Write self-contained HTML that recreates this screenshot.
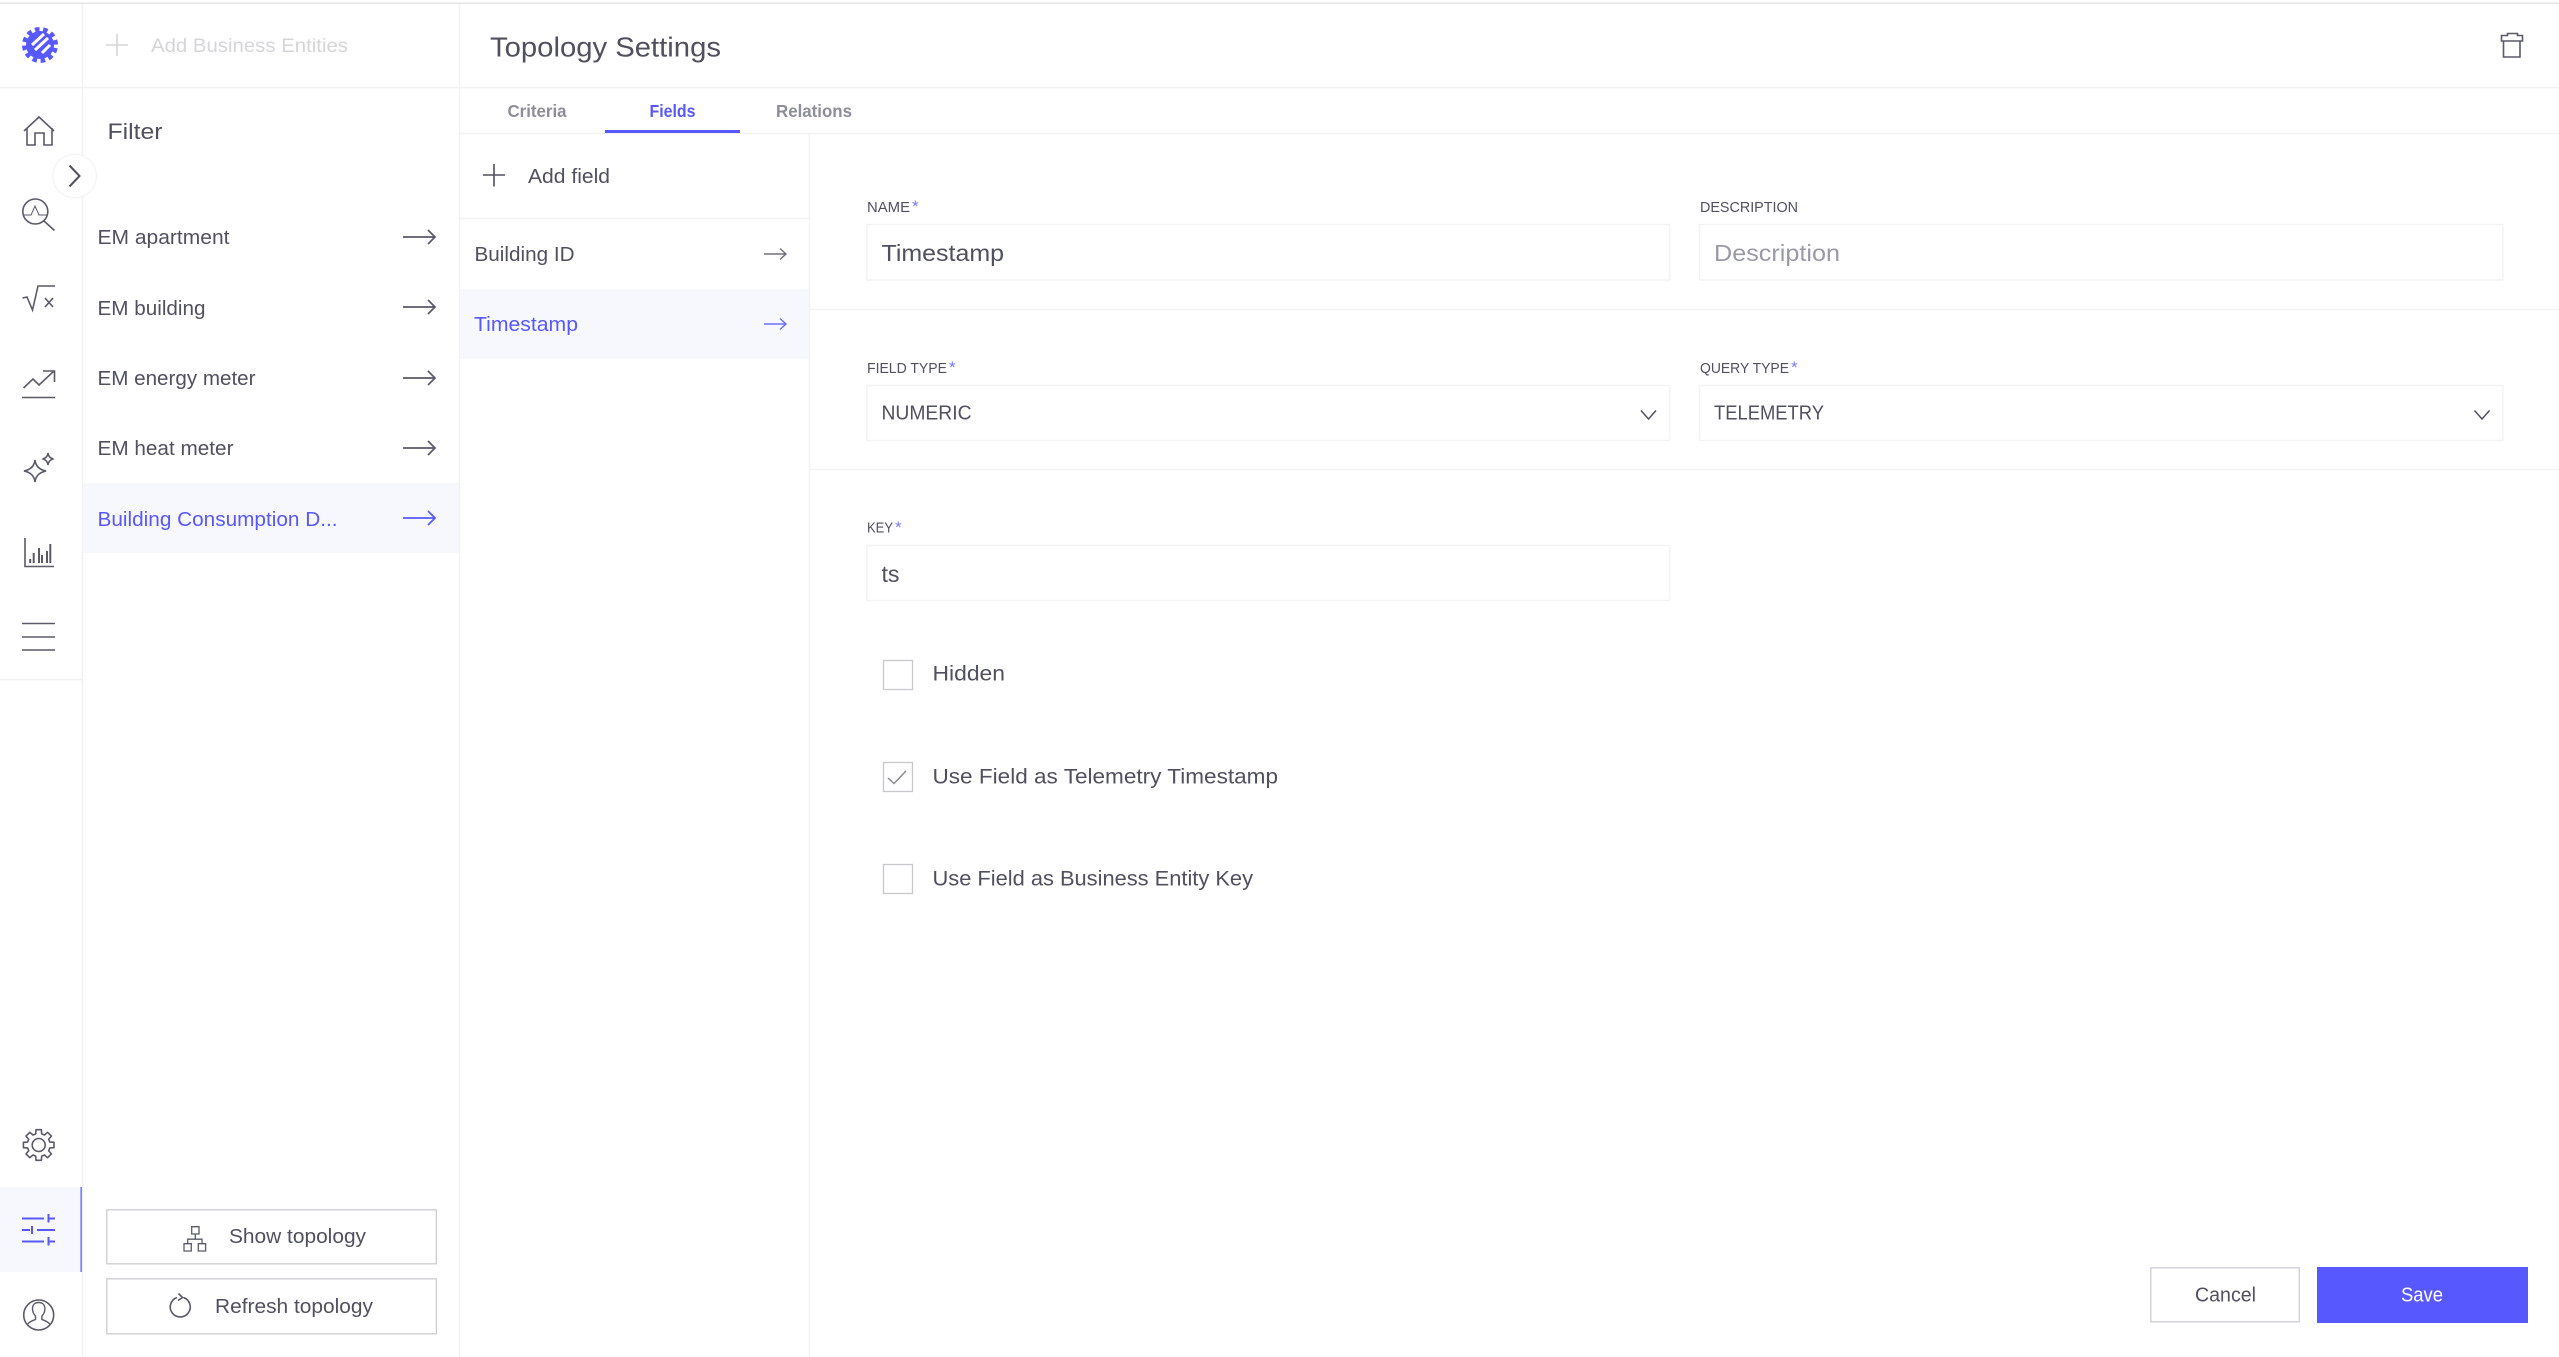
<!DOCTYPE html>
<html><head><meta charset="utf-8"><title>Topology Settings</title>
<style>
html,body{margin:0;padding:0;background:#fff;width:2559px;height:1357px;overflow:hidden}
svg{display:block}
text{font-family:"Liberation Sans",sans-serif;fill:#50505f;font-size:20px}
.i{fill:none;stroke:#5a5a68;stroke-width:1.6}
.l{fill:none;stroke:#f2f2f4;stroke-width:1.5}
.b{fill:#5858ff}
.lab{font-size:14.7px}
.inp{fill:#fff;stroke:#f2f2f4;stroke-width:1.3}
.cb{fill:#fff;stroke:#c8c8cc;stroke-width:1.3}
.btn{fill:#fff;stroke:#cdcdd4;stroke-width:1.3}
</style></head><body>
<svg width="2559" height="1357" viewBox="0 0 2559 1357" xmlns="http://www.w3.org/2000/svg">
<rect width="2559" height="1357" fill="#fff"/>
<rect x="0" y="2.5" width="2559" height="1.5" fill="#e6e6e8"/>

<!-- highlight -->
<rect x="83" y="483" width="376" height="70" fill="#f7f7fe"/>
<rect x="460" y="289" width="349" height="70" fill="#f7f7fe"/>
<rect x="0" y="1187" width="81" height="85" fill="#f7f7fe"/>
<rect x="80.5" y="1187" width="1.5" height="85" fill="#5858ff"/>

<!-- structure lines -->
<path class="l" d="M82.5 4V1357M459.5 4V1357M0 87.5H2559M459 133.5H2559M809.5 134V1357M459 218.5H809M810 309.5H2559M810 469.5H2559M0 679.5H82"/>

<!-- logo -->
<g transform="translate(40 45)">
<circle r="14" fill="#5858ff"/>
<circle r="15.500" fill="none" stroke="#5858ff" stroke-width="5" stroke-dasharray="4.500 3.617" transform="rotate(11)"/>
<g stroke="#fff" stroke-width="3" fill="none">
<path d="M-8 0L4 -11M-5 5L8 -7M2 8L10 0"/>
</g>
</g>

<!-- add business -->
<path d="M117 34V56M106 45H128" fill="none" stroke="#d5d5da" stroke-width="1.6"/>
<text x="151" y="52" style="font-size:19.6px;fill:#d5d5da" textLength="197" lengthAdjust="spacingAndGlyphs">Add Business Entities</text>

<!-- sidebar icons -->
<path class="i" d="M24 131L39 117L54 131M27 128V145H35V133H44V145H52V128"/>
<circle class="i" cx="35.3" cy="211.5" r="12.5"/>
<path class="i" d="M44 221L54.5 230.5"/>
<path class="i" d="M23.5 215H31L35 206L39 215H47" style="stroke-width:1"/>
<path class="i" d="M22.5 298L27 297L32.5 310L38 286H55M45 298L53 307M53 298L45 307"/>
<path class="i" d="M23.5 388L33 379L39 385L54 371M43 371H54.5V382"/>
<path class="i" d="M22 397.5H55"/>
<path class="i" d="M35 460Q36 469 46 471Q36 473 35 482Q34 473 24 471Q34 469 35 460Z"/>
<path class="i" d="M48 453Q48.500 458 53.500 459Q48.500 460 48 465Q47.500 460 42.500 459Q47.500 458 48 453Z"/>
<path class="i" d="M25 538V566.500H54"/>
<path d="M30.200 559V563M33.700 553V563M39 548V563M42 555V563M47 551V563M50.300 544V563" fill="none" stroke="#5a5a68" stroke-width="2"/>
<path class="i" d="M22 623.500H55M22 637H55M22 650H55"/>
<polygon class="i" transform="translate(38.7 1145)" stroke-linejoin="round" points="15.27,-2.69 15.27,2.69 11.11,2.98 9.96,5.75 12.70,8.89 8.89,12.70 5.75,9.96 2.98,11.11 2.69,15.27 -2.69,15.27 -2.98,11.11 -5.75,9.96 -8.89,12.70 -12.70,8.89 -9.96,5.75 -11.11,2.98 -15.27,2.69 -15.27,-2.69 -11.11,-2.98 -9.96,-5.75 -12.70,-8.89 -8.89,-12.70 -5.75,-9.96 -2.98,-11.11 -2.69,-15.27 2.69,-15.27 2.98,-11.11 5.75,-9.96 8.89,-12.70 12.70,-8.89 9.96,-5.75 11.11,-2.98"/>
<circle class="i" cx="38.700" cy="1145" r="6.500"/>
<path fill="none" stroke="#5858ff" stroke-width="2" d="M22 1218.500H44M49 1218.500H55M48.500 1214V1222.500M22 1230H30M37 1230H55M32 1226V1234M22 1241.500H44M49 1241.500H55M48.500 1237V1245.500"/>
<circle class="i" cx="38.700" cy="1315" r="15"/>
<path class="i" d="M27 1325c2-3.500 6-4.500 8.500-5.500v-3.500c-2-2-3-4.500-3-7.500c0-4 2.700-6 6.200-6s6.200 2 6.200 6c0 3-1 5.500-3 7.500v3.500c2.500 1 6.500 2 8.500 5.500" style="stroke-width:1.4"/>

<!-- expand -->
<circle cx="74.500" cy="176" r="21.800" fill="#fff" stroke="#f2f2f4" stroke-width="1"/>
<path d="M69.500 165.500L79.500 176L69.500 186.500" fill="none" stroke="#50505f" stroke-width="2"/>

<!-- filter list -->
<text x="107.500" y="139" style="font-size:22.4px" textLength="55" lengthAdjust="spacingAndGlyphs">Filter</text>
<text x="97.500" y="244" textLength="132" lengthAdjust="spacingAndGlyphs">EM apartment</text>
<text x="97.500" y="315" textLength="108" lengthAdjust="spacingAndGlyphs">EM building</text>
<text x="97.500" y="385" textLength="158" lengthAdjust="spacingAndGlyphs">EM energy meter</text>
<text x="97.500" y="455" textLength="136" lengthAdjust="spacingAndGlyphs">EM heat meter</text>
<text x="97.500" y="526" style="fill:#5858ff" textLength="240" lengthAdjust="spacingAndGlyphs">Building Consumption D...</text>
<g fill="none" stroke="#5a5a68" stroke-width="1.7">
<path d="M403 237H435M428 230L435 237L428 244"/>
<path d="M403 307H435M428 300L435 307L428 314"/>
<path d="M403 378H435M428 371L435 378L428 385"/>
<path d="M403 448H435M428 441L435 448L428 455"/>
<path stroke="#5858ff" d="M403 518H435M428 511L435 518L428 525"/>
</g>

<!-- sidebar buttons -->
<rect class="btn" x="106.800" y="1209.800" width="329.500" height="54"/>
<rect class="btn" x="106.800" y="1278.800" width="329.500" height="55"/>
<path class="i" style="stroke-width:1.300" d="M191.700 1226.700h7.300v7.300h-7.300zM184 1243.700h7.300v7.300h-7.300zM198.300 1243.700h7.300v7.300h-7.300zM195.300 1234v5M187.700 1243.700v-4.500h14.300v4.500"/>
<text x="229" y="1243" textLength="137" lengthAdjust="spacingAndGlyphs">Show topology</text>
<path class="i" d="M177 1297.500A10 10 0 1 0 183.500 1297.500M178.500 1293.500L182.500 1297.500L178 1300.500"/>
<text x="215" y="1313" textLength="158" lengthAdjust="spacingAndGlyphs">Refresh topology</text>

<!-- header -->
<text x="490" y="56.500" style="font-size:28px" textLength="231" lengthAdjust="spacingAndGlyphs">Topology Settings</text>
<path class="i" d="M2507.500 35.500V33.500H2517.500V35.500H2522.500V41H2501.500V35.500ZM2503.500 41V57H2520V41"/>

<!-- tabs -->
<text x="507.500" y="117" style="font-size:17.500px;font-weight:700;fill:#8e8e99" textLength="59" lengthAdjust="spacingAndGlyphs">Criteria</text>
<text x="649.500" y="117" style="font-size:17.500px;font-weight:700;fill:#5858ff" textLength="46" lengthAdjust="spacingAndGlyphs">Fields</text>
<text x="776" y="117" style="font-size:17.500px;font-weight:700;fill:#8e8e99" textLength="76" lengthAdjust="spacingAndGlyphs">Relations</text>
<rect x="605" y="130" width="135" height="3" fill="#5858ff"/>

<!-- fields list -->
<path d="M494 164V186.500M483 175H505" fill="none" stroke="#50505f" stroke-width="1.600"/>
<text x="528" y="183" style="font-size:20.500px" textLength="82" lengthAdjust="spacingAndGlyphs">Add field</text>
<text x="474.500" y="261" textLength="100" lengthAdjust="spacingAndGlyphs">Building ID</text>
<text x="474" y="331" style="fill:#5858ff" textLength="104" lengthAdjust="spacingAndGlyphs">Timestamp</text>
<path d="M764 254H786M780 248.500L786 254L780 259.500" fill="none" stroke="#70707c" stroke-width="1.400"/>
<path d="M764 324H786M780 318.500L786 324L780 329.500" fill="none" stroke="#6e6eff" stroke-width="1.400"/>

<!-- form -->
<text class="lab" x="867" y="212" textLength="43" lengthAdjust="spacingAndGlyphs">NAME</text>
<text class="lab" x="912" y="212" style="fill:#7a7aff;font-size:17px">*</text>
<rect class="inp" x="866.800" y="224.500" width="803" height="55.500"/>
<text x="881.500" y="261" style="font-size:23px" textLength="122.500" lengthAdjust="spacingAndGlyphs">Timestamp</text>

<text class="lab" x="1700" y="212" textLength="98" lengthAdjust="spacingAndGlyphs">DESCRIPTION</text>
<rect class="inp" x="1699.800" y="224.500" width="803" height="55.500"/>
<text x="1714" y="261" style="font-size:23px;fill:#9a9aa6" textLength="126" lengthAdjust="spacingAndGlyphs">Description</text>

<text class="lab" x="867" y="373" textLength="80" lengthAdjust="spacingAndGlyphs">FIELD TYPE</text>
<text class="lab" x="949" y="373" style="fill:#7a7aff;font-size:17px">*</text>
<rect class="inp" x="866.800" y="385.500" width="803" height="55"/>
<text x="881.500" y="419.500" style="font-size:20.500px" textLength="90" lengthAdjust="spacingAndGlyphs">NUMERIC</text>
<path d="M1641 410.500L1648.500 419L1656 410.500" fill="none" stroke="#50505f" stroke-width="1.500"/>

<text class="lab" x="1700" y="373" textLength="89" lengthAdjust="spacingAndGlyphs">QUERY TYPE</text>
<text class="lab" x="1791" y="373" style="fill:#7a7aff;font-size:17px">*</text>
<rect class="inp" x="1699.800" y="385.500" width="803" height="55"/>
<text x="1714" y="419.500" style="font-size:20.500px" textLength="110" lengthAdjust="spacingAndGlyphs">TELEMETRY</text>
<path d="M2474.500 410.500L2482 419L2489.500 410.500" fill="none" stroke="#50505f" stroke-width="1.500"/>

<text class="lab" x="867" y="532.500" textLength="26" lengthAdjust="spacingAndGlyphs">KEY</text>
<text class="lab" x="895" y="533" style="fill:#7a7aff;font-size:17px">*</text>
<rect class="inp" x="866.800" y="545.500" width="803" height="55"/>
<text x="881.500" y="582" style="font-size:23px" textLength="18" lengthAdjust="spacingAndGlyphs">ts</text>

<rect class="cb" x="883.500" y="660.500" width="29" height="29"/>
<text x="932.500" y="680.500" style="font-size:21.500px" textLength="72.500" lengthAdjust="spacingAndGlyphs">Hidden</text>
<rect class="cb" x="883.500" y="762.500" width="29" height="29"/>
<path d="M888 778L894 783.500L906 771" fill="none" stroke="#8a8a92" stroke-width="1.500"/>
<text x="932.500" y="783.500" style="font-size:21.500px" textLength="345.500" lengthAdjust="spacingAndGlyphs">Use Field as Telemetry Timestamp</text>
<rect class="cb" x="883.500" y="864.500" width="29" height="29"/>
<text x="932.500" y="885.500" style="font-size:21.500px" textLength="320.500" lengthAdjust="spacingAndGlyphs">Use Field as Business Entity Key</text>

<!-- footer -->
<rect class="btn" x="2150.800" y="1267.800" width="148.500" height="54"/>
<text x="2195" y="1301.500" style="font-size:20.500px" textLength="61" lengthAdjust="spacingAndGlyphs">Cancel</text>
<rect class="b" x="2317" y="1267" width="211" height="56"/>
<text x="2401" y="1301.500" style="font-size:20.500px;fill:#fff" textLength="42" lengthAdjust="spacingAndGlyphs">Save</text>
</svg>
</body></html>
